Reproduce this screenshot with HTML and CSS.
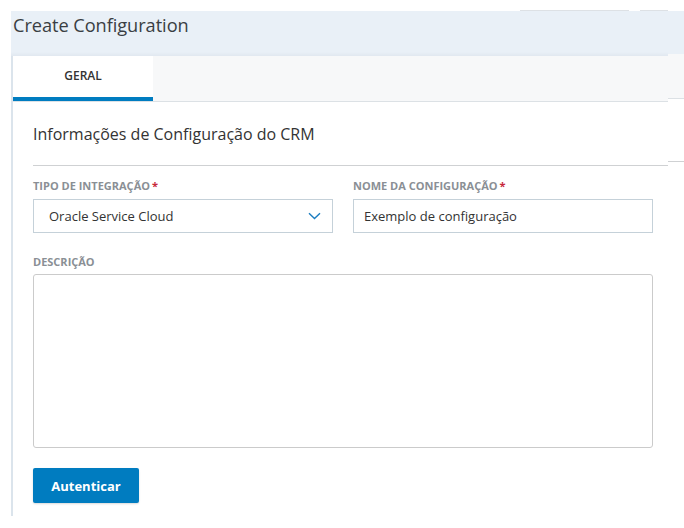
FILE: index.html
```html
<!DOCTYPE html>
<html lang="pt">
<head>
<meta charset="utf-8">
<title>Create Configuration</title>
<link rel="stylesheet" href="styles.css">
</head>
<body>
<div class="topline">
  <span class="ghost ghost-a"></span>
  <span class="ghost ghost-b"></span>
</div>
<div class="layout">
  <div class="panel">
    <div class="header"><h1 class="title">Create Configuration</h1></div>
    <div class="body">
      <div class="tabbar">
        <div class="tab active">GERAL</div>
      </div>
      <div class="content">
        <h2 class="section-title">Informações de Configuração do CRM</h2>
        <div class="divider"></div>
        <div class="row">
          <div class="field">
            <label class="label">TIPO DE INTEGRAÇÃO<span class="req">*</span></label>
            <div class="control select">
              <span>Oracle Service Cloud</span>
              <svg class="chev" width="13" height="8" viewBox="0 0 13 8"><path d="M1 1.2 L6.5 6.5 L12 1.2" fill="none" stroke="#1b7dc0" stroke-width="1.4"/></svg>
            </div>
          </div>
          <div class="field">
            <label class="label">NOME DA CONFIGURAÇÃO<span class="req">*</span></label>
            <div class="control input">Exemplo de configuração</div>
          </div>
        </div>
        <label class="label label-desc">DESCRIÇÃO</label>
        <div class="textarea"></div>
        <button class="btn">Autenticar</button>
      </div>
    </div>
  </div>
  <div class="strip">
    <div class="strip-head"></div>
    <div class="strip-tab"></div>
    <div class="strip-gap"></div>
    <div class="strip-line"></div>
  </div>
</div>
</body>
</html>
```
FILE: styles.css
```css
* { box-sizing: border-box; }
body {
  margin: 0;
  background: #fff;
  font-family: "Open Sans", "Noto Sans", sans-serif;
  color: #333;
}
.topline {
  height: 11px;
  display: flex;
  align-items: flex-end;
}
.ghost { height: 1px; background: #dde1e5; }
.ghost-a { margin-left: 520px; width: 109px; }
.ghost-b { margin-left: 11px; width: 28px; }

.layout {
  display: grid;
  grid-template-columns: 657px 16px;
  margin-left: 11px;
}
.header {
  height: 45px;
  background: linear-gradient(#e9f0f7 0, #e9f0f7 41px, #e1e8f0 45px);
  padding-left: 2px;
}
.title {
  margin: 0;
  font-size: 18.2px;
  font-weight: 400;
  line-height: 28px;
  color: #3a3e43;
  letter-spacing: -0.05px;
}
.body {
  border-left: 2px solid #dbe4ec;
  padding-bottom: 13px;
}
.tabbar {
  height: 46px;
  background: #f7f8f9;
  border-bottom: 1px solid #dce1e5;
  display: flex;
}
.tab {
  width: 140px;
  background: #fff;
  font-size: 12px;
  font-weight: 600;
  color: #333;
  display: flex;
  justify-content: center;
  padding-top: 11px;
  border-bottom: 4px solid #007cc0;
}
.content { padding-left: 20px; }
.section-title {
  margin: 21px 0 0;
  font-size: 16px;
  line-height: 22px;
  font-weight: 400;
  color: #333;
}
.divider {
  margin-top: 20px;
  height: 1px;
  background: #cfd1d3;
}
.row {
  display: grid;
  grid-template-columns: 300px 300px;
  column-gap: 20px;
  margin-top: 12px;
}
.label {
  display: block;
  font-size: 11px;
  line-height: 16px;
  font-weight: 700;
  color: #8a8f95;
}
.req { color: #c7283a; margin-left: 2px; }
.control {
  margin-top: 5px;
  height: 34px;
  border: 1px solid #c5d1d9;
  font-size: 13px;
  color: #333;
  display: flex;
  align-items: center;
}
.select { padding: 0 11px 0 15px; justify-content: space-between; }
.input { padding-left: 10px; }
.label-desc { margin-top: 21px; }
.textarea {
  margin-top: 4px;
  width: 620px;
  height: 174px;
  border: 1px solid #cbcbcb;
  border-radius: 3px;
}
.btn {
  display: block;
  margin-top: 20px;
  width: 106px;
  height: 35px;
  border: 0;
  border-radius: 2px;
  background: #007cc0;
  color: #fff;
  font-family: "Open Sans", "Noto Sans", sans-serif;
  font-size: 13px;
  font-weight: 700;
  box-shadow: 0 1px 2px rgba(0,0,0,0.15);
}
.strip-head { height: 43px; background: #e9f0f7; }
.strip-tab { height: 45px; background: #f7f8f9; border-bottom: 1px solid #dce1e5; }
.strip-gap { height: 62px; }
.strip-line { height: 1px; background: #cfd1d3; }
```
